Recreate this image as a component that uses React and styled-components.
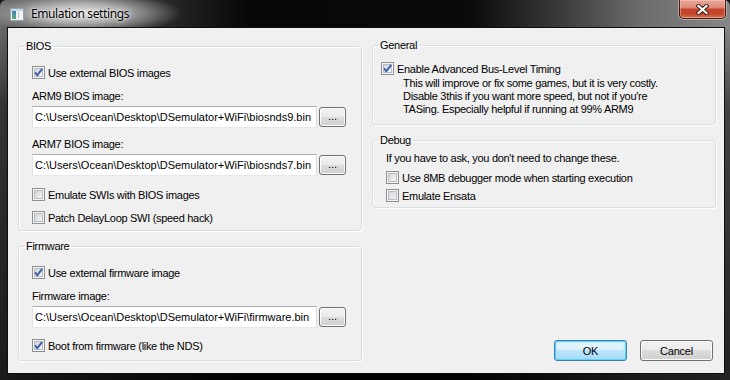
import React from 'react';
import styled, { createGlobalStyle } from 'styled-components';

const GlobalStyle = createGlobalStyle`
  html, body { margin: 0; padding: 0; background: #141414; }
  body {
    width: 730px; height: 380px; overflow: hidden;
    font-family: "Liberation Sans", Arial, sans-serif; font-size: 11px; color: #000;
  }
  * { box-sizing: border-box; }
`;

const Window = styled.div`
  width: 730px; height: 380px;
  display: flex; flex-direction: column;
  border-radius: 6px 6px 0 0;
  overflow: hidden;
  background:
    radial-gradient(ellipse 100px 22px at 82px 13px, rgba(238,238,238,0.95) 0%, rgba(205,205,205,0.75) 45%, rgba(120,120,120,0) 100%),
    linear-gradient(90deg, #6a6a6a 0px, #555 22px, #262626 170px, #060606 250px, #0a0a0a 470px, #3a3a3a 560px, #6c6c6c 640px, #878787 730px);
`;

const TitleBar = styled.div`
  height: 27px; flex: none;
  display: flex; align-items: flex-start;
`;

const AppIcon = styled.svg`
  flex: none; margin: 8px 0 0 10px;
`;

const Title = styled.div`
  margin: 6px 0 0 7px;
  font-family: "Noto Sans", "Open Sans", sans-serif;
  font-size: 12px; line-height: 16px; color: #000;
  letter-spacing: -0.4px;
  text-shadow: 0 0 6px rgba(255,255,255,0.9), 0 0 2px rgba(255,255,255,0.9);
`;

const CloseButton = styled.div`
  margin-left: auto; margin-right: 4px;
  width: 47px; height: 19px;
  display: flex; align-items: center; justify-content: center;
  border: 1px solid rgba(45, 8, 4, 0.85); border-top: none;
  border-radius: 0 0 5px 5px;
  background: linear-gradient(180deg, #e9a898 0%, #dc8a78 42%, #c5432b 52%, #c6462d 78%, #d9704f 100%);
  box-shadow: 0 0 0 1px rgba(255,255,255,0.35), inset 0 0 0 1px rgba(255,210,200,0.45);
`;

const Frame = styled.div`
  flex: 1; display: flex;
  padding: 0 5px 7px 7px;
  background: linear-gradient(180deg, rgba(0,0,0,0) 0px, rgba(0,0,0,0.5) 80px, rgba(0,0,0,0.75) 100%);
`;

const Client = styled.div`
  flex: 1; display: flex; gap: 10px;
  border: 1px solid #0e0e0e;
  background: #f0f0f0;
  padding: 12px 8px 12px 10px;
`;

const Column = styled.div`
  width: 344px; flex: none;
  display: flex; flex-direction: column;
  gap: 9px;
  margin-top: ${p => p.$shift || 0}px;
`;

const Group = styled.fieldset`
  margin: 0; padding: 0; min-width: 0;
  border: 1px solid #d5dfe5; border-radius: 3px;
  box-shadow: inset 1px 1px 0 #fff, 1px 1px 0 #fff;
`;

const Legend = styled.legend`
  margin-left: 5px; padding: 0 2px;
  line-height: 13px; font-size: 11px; letter-spacing: -0.3px;
`;

const GroupBody = styled.div`
  display: flex; flex-direction: column;
  padding: ${p => p.$pad};
`;

const CheckRow = styled.label`
  height: 15px; display: flex; align-items: center; gap: 3px;
  margin-top: ${p => p.$mt || 0}px;
  letter-spacing: -0.3px; white-space: nowrap;
`;

const BoxSvg = styled.svg`
  flex: none; display: block;
`;

const Text = styled.div`
  line-height: 13px; letter-spacing: -0.3px; white-space: nowrap;
  margin-top: ${p => p.$mt || 0}px;
  padding-left: ${p => p.$indent || 0}px;
`;

const Field = styled.div`
  display: flex; flex-direction: column; gap: 3px;
  margin-top: ${p => p.$mt || 0}px;
`;

const InputRow = styled.div`
  display: flex; align-items: center; gap: 2px;
`;

const PathInput = styled.input`
  width: 285px; height: 22px; margin: 0;
  border: 1px solid; border-color: #abadb3 #dbdfe6 #e3e9ef #e2e3ea;
  padding: 0 2px; background: #fff; color: #000; outline: none;
  font-family: "Liberation Sans", Arial, sans-serif; font-size: 11px;
`;

const BrowseButton = styled.button`
  width: 27px; height: 20px; margin: 0; padding: 0 0 2px;
  border: 1px solid #707070; border-radius: 3px;
  background: linear-gradient(180deg, #f2f2f2 0%, #ebebeb 49%, #dddddd 50%, #cfcfcf 100%);
  box-shadow: inset 0 0 0 1px #fcfcfc;
  font-family: "Liberation Sans", Arial, sans-serif; font-size: 11px; color: #000;
  line-height: 12px;
`;

const ButtonRow = styled.div`
  margin-top: auto;
  display: flex; justify-content: flex-end; gap: 13px;
  padding-right: 3px;
`;

const DialogButton = styled.button`
  width: 73px; height: 21px; margin: 0; padding: 0;
  border-radius: 3px;
  border: 1px solid ${p => (p.$default ? '#3c7fb1' : '#707070')};
  background: ${p => (p.$default
    ? 'linear-gradient(180deg, #eaf6fd 0%, #d9f0fc 49%, #bee6fd 50%, #a7d9f5 100%)'
    : 'linear-gradient(180deg, #f2f2f2 0%, #ebebeb 49%, #dddddd 50%, #cfcfcf 100%)')};
  box-shadow: ${p => (p.$default
    ? 'inset 0 0 0 1px #5fd3fb, inset 0 0 3px 1px rgba(140,225,255,0.8)'
    : 'inset 0 0 0 1px #fcfcfc')};
  font-family: "Liberation Sans", Arial, sans-serif; font-size: 11px; color: #000;
  letter-spacing: -0.2px;
`;

function CheckBox({ checked }) {
  return (
    <BoxSvg width="13" height="13" viewBox="0 0 13 13">
      <defs>
        <linearGradient id="cbg" x1="0" y1="0" x2="1" y2="1">
          <stop offset="0" stopColor="#cfd2d7" />
          <stop offset="1" stopColor="#f8f8f8" />
        </linearGradient>
      </defs>
      <rect x="0.5" y="0.5" width="12" height="12" fill="#f5f5f5" stroke="#8e8f8f" />
      <rect x="2.5" y="2.5" width="8" height="8" fill="url(#cbg)" stroke="#b9bcc1" />
      {checked && (
        <path d="M3 6.4 L5.3 9.2 L10.2 2.9" fill="none" stroke="#3f5cae" strokeWidth="1.9" strokeLinejoin="miter" />
      )}
    </BoxSvg>
  );
}

function Check({ checked, children, mt }) {
  return (
    <CheckRow $mt={mt}>
      <CheckBox checked={checked} />
      <span>{children}</span>
    </CheckRow>
  );
}

function PathField({ label, value, mt }) {
  return (
    <Field $mt={mt}>
      <Text>{label}</Text>
      <InputRow>
        <PathInput readOnly value={value} />
        <BrowseButton>...</BrowseButton>
      </InputRow>
    </Field>
  );
}

const base = 'C:\\Users\\Ocean\\Desktop\\DSemulator+WiFi\\';

export default function App() {
  return (
    <>
      <GlobalStyle />
      <Window>
        <TitleBar>
          <AppIcon width="14" height="13" viewBox="0 0 14 13">
            <defs>
              <linearGradient id="ig" x1="0" y1="0" x2="0" y2="1">
                <stop offset="0" stopColor="#3a7fc4" />
                <stop offset="1" stopColor="#59b46a" />
              </linearGradient>
            </defs>
            <rect x="0.5" y="0.5" width="13" height="12" fill="#eef2f5" stroke="#9aa4ae" />
            <rect x="1" y="1" width="12" height="2" fill="#c5d6e4" />
            <rect x="2" y="3" width="4" height="8" fill="url(#ig)" />
            <rect x="8" y="4" width="1" height="6" fill="#b8c4cf" />
          </AppIcon>
          <Title>Emulation settings</Title>
          <CloseButton>
            <svg width="13" height="11" viewBox="0 0 13 11">
              <path d="M2.5 2 L10.5 9 M10.5 2 L2.5 9" stroke="#3b1a14" strokeWidth="4.2" strokeLinecap="square" />
              <path d="M2.5 2 L10.5 9 M10.5 2 L2.5 9" stroke="#ffffff" strokeWidth="2.2" strokeLinecap="square" />
            </svg>
          </CloseButton>
        </TitleBar>
        <Frame>
          <Client>
            <Column>
              <Group>
                <Legend>BIOS</Legend>
                <GroupBody $pad="12px 14px 5px 13px">
                  <Check checked>Use external BIOS images</Check>
                  <PathField mt={10} label="ARM9 BIOS image:" value={base + 'biosnds9.bin'} />
                  <PathField mt={10} label="ARM7 BIOS image:" value={base + 'biosnds7.bin'} />
                  <Check mt={11}>Emulate SWIs with BIOS images</Check>
                  <Check mt={8}>Patch DelayLoop SWI (speed hack)</Check>
                </GroupBody>
              </Group>
              <Group>
                <Legend>Firmware</Legend>
                <GroupBody $pad="12px 14px 7px 13px">
                  <Check checked>Use external firmware image</Check>
                  <PathField mt={10} label="Firmware image:" value={base + 'firmware.bin'} />
                  <Check mt={10} checked>Boot from firmware (like the NDS)</Check>
                </GroupBody>
              </Group>
            </Column>
            <Column $shift={-1}>
              <Group>
                <Legend>General</Legend>
                <GroupBody $pad="9px 8px 8px 8px">
                  <Check checked>Enable Advanced Bus-Level Timing</Check>
                  <Text $mt={1} $indent={22}>
                    This will improve or fix some games, but it is very costly.<br />
                    Disable 3this if you want more speed, but not if you're<br />
                    TASing. Especially helpful if running at 99% ARM9
                  </Text>
                </GroupBody>
              </Group>
              <Group>
                <Legend>Debug</Legend>
                <GroupBody $pad="5px 8px 4px 13px">
                  <Text>If you have to ask, you don't need to change these.</Text>
                  <Check mt={5}>Use 8MB debugger mode when starting execution</Check>
                  <Check mt={3}>Emulate Ensata</Check>
                </GroupBody>
              </Group>
              <ButtonRow>
                <DialogButton $default>OK</DialogButton>
                <DialogButton>Cancel</DialogButton>
              </ButtonRow>
            </Column>
          </Client>
        </Frame>
      </Window>
    </>
  );
}
